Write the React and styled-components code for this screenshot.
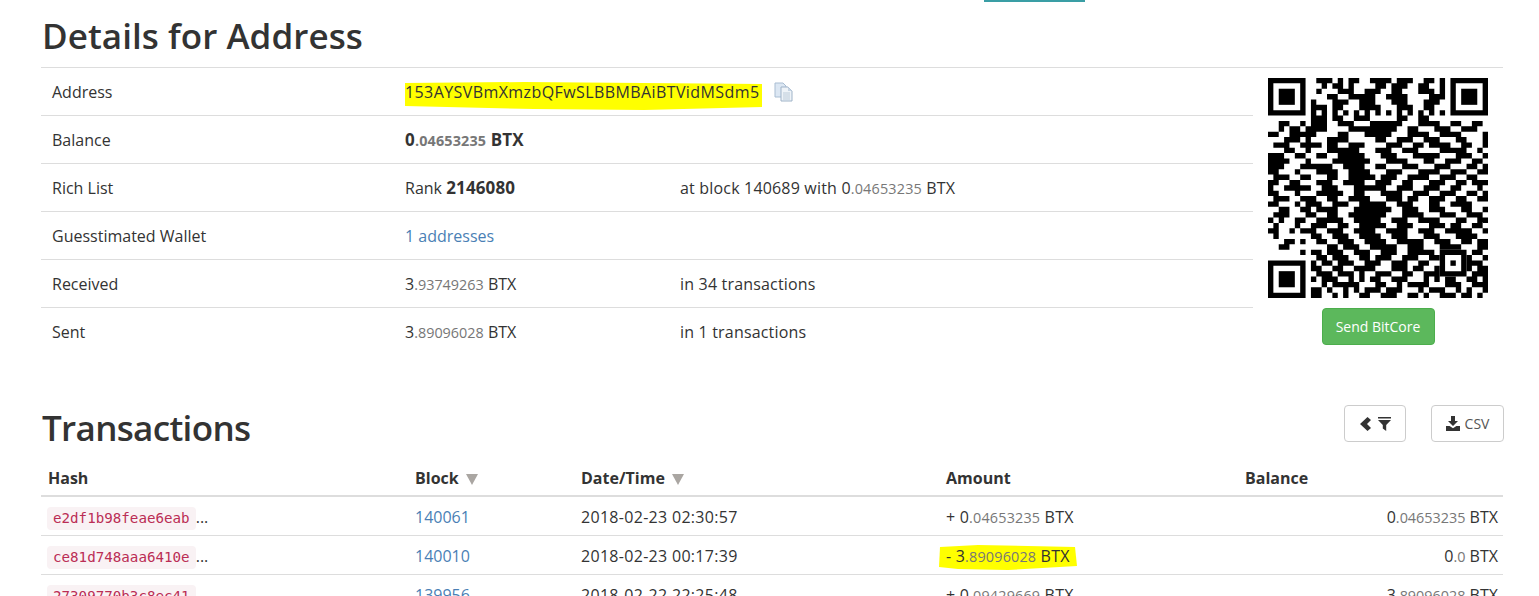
import React from 'react';
import styled, { createGlobalStyle } from 'styled-components';

const GlobalStyle = createGlobalStyle`
  html, body {
    margin: 0;
    height: 596px;
    overflow: hidden;
    background: #fff;
  }
  body {
    font-family: "Open Sans", "Liberation Sans", sans-serif;
    font-size: 16px;
    line-height: 24px;
    color: #333;
  }
  * {
    box-sizing: border-box;
  }
`;

// 41x41 code, finder corners, alignment mark and timing lines are drawn in code
const QR_ROWS = [
  '00000000011101011001111011100110100000000',
  '00000000001011010000110111001100100000000',
  '00000000010001110011100110001110100000000',
  '00000000000110011111001111000011100000000',
  '00000000100011100111000111000111000000000',
  '00000000111011000111100011100110000000000',
  '00000000000000000000000000000000000000000',
  '00000000111011001110000011001100000000000',
  '00110000111001110001111110001111001100110',
  '00101101111000011111111100110001110011100',
  '11001101100001100011111000111100111100001',
  '00011101000111100000110011100111000110001',
  '01110011110110011100001110011011110011001',
  '00011001000111111000111001110000111110010',
  '11100110011001111100011100011111000111001',
  '11110011000011111110001111000110011100110',
  '11100001111100111100110001110001110001101',
  '11000110011110011110001110001111001110011',
  '01110011000110011111011100111100111001100',
  '11001110011100111100111001100011100110111',
  '10011111001110001111110011100111001100010',
  '11000110011111001100011110011100111001101',
  '01110011100110011110001110110011100110011',
  '11000111110011100111110011100011001111000',
  '00110011011110001111111001110011100011001',
  '01110011100110011111110001111000111001110',
  '10100110011111001111100111001111000110011',
  '01000110111001100111110011100011101100110',
  '11001001100111001111001111001110011111001',
  '01000010110011100111100111000111000111100',
  '00011000011001110011110011111001110011011',
  '00110000000110111001111100111000111100011',
  '00000000110111001110011100111110011100110',
  '00000000011011100110111001110011100111001',
  '00000000101101110011100111001100111001110',
  '00000000110011001111000111011001111011011',
  '00000000011101110100111001100111001100111',
  '00000000101110010101100111000101011001101',
  '00000000001011111000110010111100011100111',
  '00000000110100101011101110001011100101001',
  '00000000110010100110011100110100111011010',
];

const reserved = (r, c) =>
  (r < 8 && c < 8) || (r < 8 && c > 32) || (r > 32 && c < 8) ||
  (r >= 32 && r <= 36 && c >= 32 && c <= 36);

const qrPath = () => {
  let d = '';
  QR_ROWS.forEach((row, r) => {
    [...row].forEach((v, c) => {
      if (reserved(r, c)) return;
      const timing = r === 6 || c === 6;
      const on = timing ? (r + c) % 2 === 0 : v === '1';
      if (on) d += `M${c} ${r}h1v1h-1z`;
    });
  });
  return d;
};

const ring = (x, y, size) =>
  `M${x} ${y}h${size}v${size}h-${size}zM${x + 1} ${y + 1}v${size - 2}h${size - 2}v-${size - 2}z`;

const Page = styled.div`
  padding: 0 36px 0 42px;
`;

const TopStrip = styled.div`
  width: 101px;
  height: 2px;
  margin-left: 942px;
  background: #3a9ea5;
`;

const Title = styled.h1`
  margin: 0;
  font-size: 35px;
  line-height: 40px;
  font-weight: 540;
  color: #333;
  letter-spacing: ${p => p.$spacing || 0}px;
`;

const DetailsTitle = styled(Title)`
  padding: 14px 0 11px;
`;

const Summary = styled.div`
  display: flex;
  margin-left: -1px;
  border-top: 1px solid #ddd;
`;

const SummaryTable = styled.table`
  width: 1212px;
  table-layout: fixed;
  border-collapse: collapse;
`;

const SummaryRow = styled.tr`
  height: ${p => (p.$first ? '47px' : '48px')};
  border-top: ${p => (p.$first ? '0' : '1px solid #ddd')};
`;

const SummaryCell = styled.td`
  padding: 2px 11px 0;
  vertical-align: middle;
  white-space: nowrap;
  width: ${p => p.$width || 'auto'};
`;

const Fraction = styled.span`
  font-size: 14.4px;
  color: #777;
`;

const Strong = styled.span`
  font-weight: 700;
  font-size: 17px;
  letter-spacing: 0.15px;
`;

const AddressText = styled.span`
  letter-spacing: 0.41px;
`;

const Note = styled.span`
  letter-spacing: 0.18px;
`;

const Link = styled.a`
  color: #4a7fb5;
  text-decoration: none;
`;

const Marked = styled.span`
  position: relative;
  display: inline-block;
  z-index: 0;
`;

const MarkerStroke = styled.svg`
  position: absolute;
  z-index: -1;
  left: ${p => p.$left}px;
  top: ${p => p.$top}px;
`;

const CopyIcon = styled.svg`
  vertical-align: -4px;
  margin-left: 15px;
`;

const Aside = styled.div`
  width: 250px;
  display: flex;
  flex-direction: column;
  align-items: center;
  padding-top: 10px;
`;

const QrImage = styled.svg`
  display: block;
  width: 220px;
  height: 220px;
`;

const SendButton = styled.button`
  margin-top: 10px;
  width: 113px;
  height: 37px;
  padding: 0;
  background: #5cb85c;
  border: 1px solid #4cae4c;
  border-radius: 4px;
  color: #fff;
  font: 14px/20px "Open Sans", "Liberation Sans", sans-serif;
`;

const TxHeader = styled.div`
  display: flex;
  align-items: center;
  margin-top: 38px;
  height: 69px;
`;

const TxTools = styled.div`
  margin-left: auto;
  display: flex;
  gap: 25px;
  margin-right: -1px;
  margin-top: -8px;
`;

const ToolButton = styled.button`
  display: flex;
  align-items: center;
  justify-content: center;
  gap: ${p => p.$gap}px;
  width: ${p => p.$width}px;
  height: 37px;
  padding: 0;
  background: #fff;
  border: 1px solid #ccc;
  border-radius: 4px;
  color: #555;
  font: 14px/20px "Open Sans", "Liberation Sans", sans-serif;
`;

const TxTable = styled.table`
  width: 1462px;
  margin: 0 0 0 -1px;
  table-layout: fixed;
  border-collapse: collapse;
`;

const HeadCell = styled.th`
  height: 34px;
  padding: 0 7px 2px;
  text-align: left;
  font-weight: 700;
  white-space: nowrap;
  border-bottom: 2px solid #ddd;
  width: ${p => p.$width || 'auto'};
`;

const SortArrow = styled.span`
  display: inline-block;
  margin-left: 7px;
  width: 0;
  height: 0;
  border-left: 6.5px solid transparent;
  border-right: 6.5px solid transparent;
  border-top: 11px solid #aaa6a2;
  vertical-align: -1px;
`;

const TxRow = styled.tr`
  height: 39px;
  border-bottom: 1px solid #ddd;
`;

const TxCell = styled.td`
  padding: 3px 5px 0 7px;
  white-space: nowrap;
  text-align: ${p => (p.$right ? 'right' : 'left')};
`;

const DateText = styled.span`
  letter-spacing: 0.3px;
`;

const HashCode = styled.code`
  display: inline-block;
  padding: 0 6px;
  margin-left: -1px;
  font: 14.2px/23px "DejaVu Sans Mono", "Liberation Mono", monospace;
  color: #bb2d55;
  background: #f9f2f4;
  border-radius: 4px;
`;

const transactions = [
  { hash: 'e2df1b98feae6eab', block: '140061', date: '2018-02-23 02:30:57', sign: '+', whole: '0', frac: '04653235', balWhole: '0', balFrac: '04653235' },
  { hash: 'ce81d748aaa6410e', block: '140010', date: '2018-02-23 00:17:39', sign: '-', whole: '3', frac: '89096028', balWhole: '0', balFrac: '0', marked: true },
  { hash: '27309770b3c8ec41', block: '139956', date: '2018-02-22 22:25:48', sign: '+', whole: '0', frac: '09429669', balWhole: '3', balFrac: '89096028' },
];

function Amount({ whole, frac }) {
  return (
    <>
      {whole}<Fraction>.{frac}</Fraction> BTX
    </>
  );
}

function QrCode() {
  return (
    <QrImage viewBox="0 0 41 41" fill="#000">
      <path d={qrPath()} />
      {[[0, 0], [34, 0], [0, 34]].map(([x, y]) => (
        <g key={x + '-' + y}>
          <path d={ring(x, y, 7)} fillRule="evenodd" />
          <rect x={x + 2} y={y + 2} width="3" height="3" />
        </g>
      ))}
      <path d={ring(32, 32, 5)} fillRule="evenodd" />
      <rect x="34" y="34" width="1" height="1" />
    </QrImage>
  );
}

function FilterGlyph() {
  return (
    <svg width="13" height="14" viewBox="0 0 13 14" fill="#333">
      <rect x="0" y="0" width="13" height="1.5" />
      <path d="M0 3h13L8.2 8V14L4.8 11.6V8z" />
    </svg>
  );
}

function ChevronGlyph() {
  return (
    <svg width="11" height="14" viewBox="0 0 11 14" fill="#333">
      <path d="M7.5 0L11 3 7 7l4 4-3.500 3L0 7z" />
    </svg>
  );
}

function DownloadGlyph() {
  return (
    <svg width="14" height="15" viewBox="0 0 14 15" fill="#333">
      <path d="M5 0h4v5h3L7 10 2 5h3z" />
      <path d="M0 10h3.600L7 12.200 10.400 10H14v5H0z" />
    </svg>
  );
}

function CopyGlyph() {
  return (
    <CopyIcon width="20" height="20" viewBox="0 0 20 20">
      <path d="M1 1h8l3 3v11H1z" fill="#dce7f3" stroke="#a9bdd2" />
      <path d="M7 5h7l4 4v10H7z" fill="#eef3f8" stroke="#9fb3c8" />
      <path d="M14 5v4h4z" fill="#c5d4e3" />
      <path d="M9 11h7M9 13h7M9 15h7M9 17h7" stroke="#bccbd9" />
    </CopyIcon>
  );
}

export default function App() {
  return (
    <Page>
      <GlobalStyle />
      <TopStrip />
      <DetailsTitle $spacing={0.05}>Details for Address</DetailsTitle>
      <Summary>
        <SummaryTable>
          <tbody>
            <SummaryRow $first>
              <SummaryCell $width="353px">Address</SummaryCell>
              <SummaryCell $width="275px">
                <Marked>
                  <MarkerStroke $left={-1} $top={0} width="360" height="32" viewBox="0 0 360 32">
                    <path d="M1 3L120 2L358 4L358 27L240 30L130 29L1 26z" fill="#ffff00" />
                  </MarkerStroke>
                  <AddressText>153AYSVBmXmzbQFwSLBBMBAiBTVidMSdm5</AddressText>
                </Marked>
                <CopyGlyph />
              </SummaryCell>
              <SummaryCell />
            </SummaryRow>
            <SummaryRow>
              <SummaryCell>Balance</SummaryCell>
              <SummaryCell>
                <Strong>0<Fraction>.04653235</Fraction> BTX</Strong>
              </SummaryCell>
              <SummaryCell />
            </SummaryRow>
            <SummaryRow>
              <SummaryCell>Rich List</SummaryCell>
              <SummaryCell>Rank <Strong>2146080</Strong></SummaryCell>
              <SummaryCell><Note>at block 140689 with <Amount whole="0" frac="04653235" /></Note></SummaryCell>
            </SummaryRow>
            <SummaryRow>
              <SummaryCell>Guesstimated Wallet</SummaryCell>
              <SummaryCell><Link>1 addresses</Link></SummaryCell>
              <SummaryCell />
            </SummaryRow>
            <SummaryRow>
              <SummaryCell>Received</SummaryCell>
              <SummaryCell><Amount whole="3" frac="93749263" /></SummaryCell>
              <SummaryCell><Note>in 34 transactions</Note></SummaryCell>
            </SummaryRow>
            <SummaryRow>
              <SummaryCell>Sent</SummaryCell>
              <SummaryCell><Amount whole="3" frac="89096028" /></SummaryCell>
              <SummaryCell><Note>in 1 transactions</Note></SummaryCell>
            </SummaryRow>
          </tbody>
        </SummaryTable>
        <Aside>
          <QrCode />
          <SendButton>Send BitCore</SendButton>
        </Aside>
      </Summary>

      <TxHeader>
        <Title $spacing={-0.67}>Transactions</Title>
        <TxTools>
          <ToolButton $width={62} $gap={7}><ChevronGlyph /><FilterGlyph /></ToolButton>
          <ToolButton $width={73} $gap={5}><DownloadGlyph />CSV</ToolButton>
        </TxTools>
      </TxHeader>
      <TxTable>
        <thead>
          <tr>
            <HeadCell $width="367px">Hash</HeadCell>
            <HeadCell $width="166px">Block<SortArrow /></HeadCell>
            <HeadCell $width="365px">Date/Time<SortArrow /></HeadCell>
            <HeadCell $width="299px">Amount</HeadCell>
            <HeadCell>Balance</HeadCell>
          </tr>
        </thead>
        <tbody>
          {transactions.map(tx => (
            <TxRow key={tx.hash}>
              <TxCell><HashCode>{tx.hash}</HashCode>...</TxCell>
              <TxCell><Link>{tx.block}</Link></TxCell>
              <TxCell><DateText>{tx.date}</DateText></TxCell>
              <TxCell>
                <Marked>
                  {tx.marked && (
                    <MarkerStroke $left={-8} $top={0} width="140" height="27" viewBox="0 0 140 27">
                      <path d="M2 3L40 1L137 3L139 22L70 26L20 25L1 23z" fill="#ffff00" />
                    </MarkerStroke>
                  )}
                  <Note>{tx.sign} <Amount whole={tx.whole} frac={tx.frac} /></Note>
                </Marked>
              </TxCell>
              <TxCell $right><Amount whole={tx.balWhole} frac={tx.balFrac} /></TxCell>
            </TxRow>
          ))}
        </tbody>
      </TxTable>
    </Page>
  );
}
